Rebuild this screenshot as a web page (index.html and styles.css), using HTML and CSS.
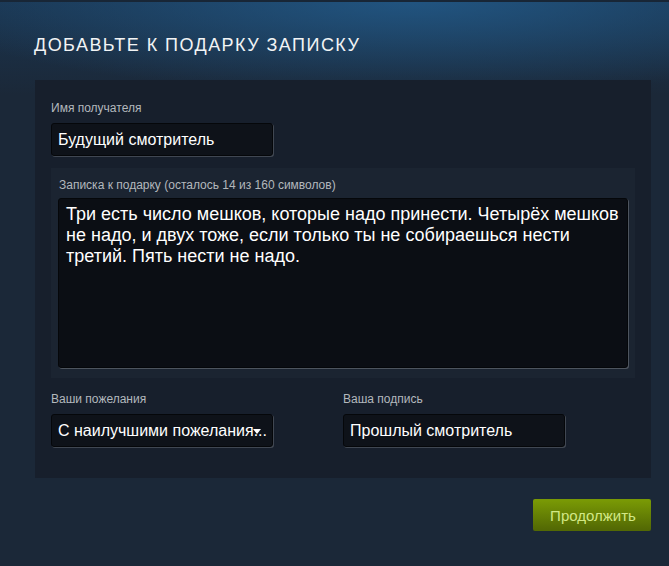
FILE: index.html
```html
<!DOCTYPE html>
<html lang="ru">
<head>
<meta charset="utf-8">
<title>Добавьте к подарку записку</title>
<link rel="stylesheet" href="styles.css">
</head>
<body>
<div class="page">
  <header class="head">
    <h1 class="title">ДОБАВЬТЕ К ПОДАРКУ ЗАПИСКУ</h1>
  </header>
  <main class="content">
    <section class="panel">
      <div class="field">
        <div class="label">Имя получателя</div>
        <div class="input">Будущий смотритель</div>
      </div>
      <div class="note">
        <div class="label note-label">Записка к подарку (осталось 14 из 160 символов)</div>
        <div class="textarea">Три есть число мешков, которые надо принести. Четырёх мешков не надо, и двух тоже, если только ты не собираешься нести третий. Пять нести не надо.</div>
      </div>
      <div class="row">
        <div class="field">
          <div class="label">Ваши пожелания</div>
          <div class="input select"><span class="select-text">С наилучшими пожелания...</span><span class="arrow"></span></div>
        </div>
        <div class="field">
          <div class="label">Ваша подпись</div>
          <div class="input">Прошлый смотритель</div>
        </div>
      </div>
    </section>
    <div class="actions">
      <button class="btn" type="button">Продолжить</button>
    </div>
  </main>
</div>
</body>
</html>
```

FILE: styles.css
```css
html, body {
  margin: 0;
  padding: 0;
}

body {
  background: #1b2838;
  font-family: "Liberation Sans", Arial, sans-serif;
  color: #fff;
  width: 669px;
  height: 566px;
  overflow: hidden;
}

.page {
  min-height: 566px;
  background:
    radial-gradient(ellipse 75% 95px at 62% 0%, rgba(34, 88, 134, 0.9) 0%, rgba(34, 88, 134, 0.4) 55%, rgba(27, 40, 56, 0) 100%),
    linear-gradient(to bottom, #1a3550 0px, #1b2838 95px);
}

.head {
  height: 80px;
  padding-left: 34px;
  box-sizing: border-box;
  border-top: 2px solid #182636;
}

.title {
  margin: 0;
  padding-top: 34px;
  font-size: 18px;
  line-height: 18px;
  font-weight: normal;
  letter-spacing: 1.45px;
  color: #f2f4f5;
}

.content {
  padding: 0 18px 0 35px;
}

.panel {
  background: #171f2c;
  padding: 21px 16px 31px 16px;
}

.label {
  font-size: 12px;
  line-height: 15px;
  color: #b3b8bd;
}

.field .label {
  margin-bottom: 7px;
}

.input {
  box-sizing: border-box;
  width: 222px;
  height: 33px;
  background: #0e1219;
  border: 1px solid #05070a;
  border-radius: 3px;
  box-shadow: 1px 1px 0 rgba(255, 255, 255, 0.18);
  padding: 0 6px;
  font-size: 16px;
  line-height: 31px;
  color: #fff;
  white-space: nowrap;
  overflow: hidden;
}

.note {
  margin-top: 12px;
  background: #1b2431;
  padding: 10px 7px 10px 7px;
}

.note-label {
  padding-left: 1px;
  margin-bottom: 5px;
}

.textarea {
  box-sizing: border-box;
  height: 170px;
  background: #0b0e14;
  border: 1px solid #05070a;
  border-radius: 3px;
  box-shadow: 1px 1px 0 rgba(255, 255, 255, 0.22);
  padding: 5px 7px;
  font-size: 18px;
  line-height: normal;
  color: #fff;
}

.row {
  margin-top: 14px;
  display: grid;
  grid-template-columns: 292px 1fr;
}

.select {
  position: relative;
}

.select-text {
  display: block;
}

.arrow {
  position: absolute;
  right: 11px;
  top: 14px;
  width: 0;
  height: 0;
  border-left: 4px solid transparent;
  border-right: 4px solid transparent;
  border-top: 5px solid #fff;
}

.actions {
  display: flex;
  justify-content: flex-end;
  margin-top: 21px;
}

.btn {
  width: 118px;
  height: 32px;
  border: none;
  border-radius: 2px;
  background: linear-gradient(to bottom, #799905 5%, #536904 95%);
  color: #d2e885;
  font-family: "Liberation Sans", Arial, sans-serif;
  font-size: 15px;
  padding: 0 0 0 2px;
  cursor: pointer;
}
```
